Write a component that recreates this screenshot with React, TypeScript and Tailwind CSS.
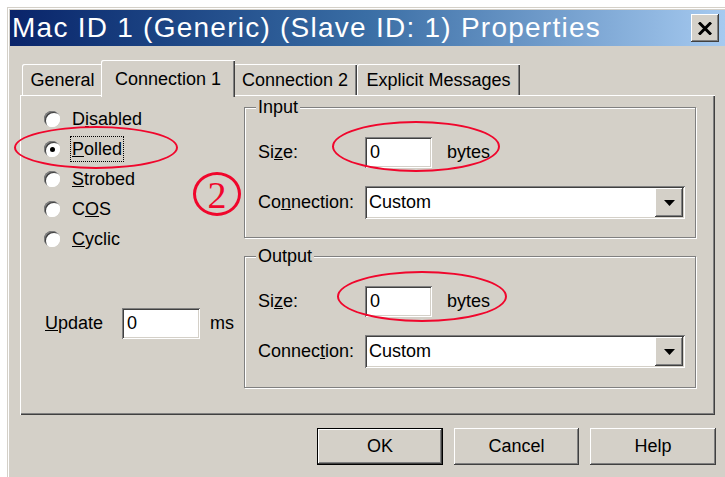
import { ReactNode } from 'react';

const sunken =
  'shadow-[inset_1px_1px_0_#808080,inset_-1px_-1px_0_#fff,inset_2px_2px_0_#404040,inset_-2px_-2px_0_#d4d0c8]';
const raised =
  'shadow-[inset_-1px_-1px_0_#404040,inset_1px_1px_0_#fff,inset_-2px_-2px_0_#808080,inset_2px_2px_0_#d4d0c8]';

function Radio({ label, checked, focused }: { label: ReactNode; checked?: boolean; focused?: boolean }) {
  return (
    <div className="h-[30px] flex items-center pl-[24px]">
      <div className="w-[16px] h-[16px] rounded-full bg-white flex items-center justify-center shadow-[inset_1px_1px_0_#808080,inset_-1px_-1px_0_#fff,inset_2px_2px_0_#404040]">
        {checked && <div className="w-[5px] h-[5px] rounded-full bg-black" />}
      </div>
      <span
        className={
          focused
            ? 'ml-[10px] px-[1px] leading-[24px] border border-dotted border-black'
            : 'ml-[12px] leading-[24px]'
        }
      >
        {label}
      </span>
    </div>
  );
}

function TextBox({ width, value }: { width: string; value: string }) {
  return (
    <div className={`${width} h-[31px] bg-white flex items-center pl-[5px] ${sunken}`}>{value}</div>
  );
}

function Combo() {
  return (
    <div className={`w-[320px] h-[33px] bg-white flex items-center justify-between pl-[4px] pr-[2px] ${sunken}`}>
      <span>Custom</span>
      <div className={`w-[28px] h-[29px] bg-[#d4d0c8] flex items-center justify-center ${raised}`}>
        <svg width="11" height="6" viewBox="0 0 11 6">
          <path d="M0 0h11L5.5 6z" fill="#000" />
        </svg>
      </div>
    </div>
  );
}

function Group({ title, height, conn }: { title: string; height: string; conn: ReactNode }) {
  return (
    <div
      className={`relative ${height} border border-[#808080] shadow-[inset_1px_1px_0_#fff,1px_1px_0_#fff] flex flex-col pt-[29px] gap-[18px]`}
    >
      <span className="absolute -top-[11px] left-[11px] px-[2px] bg-[#d4d0c8] leading-[20px]">{title}</span>
      <div className="flex items-center h-[31px]">
        <span className="w-[120px] pl-[13px]">
          Si<u>z</u>e:
        </span>
        <TextBox width="w-[67px]" value="0" />
        <span className="ml-[15px]">bytes</span>
      </div>
      <div className="flex items-center h-[33px]">
        <span className="w-[120px] pl-[13px]">{conn}</span>
        <Combo />
      </div>
    </div>
  );
}

export default function App() {
  return (
    <div className="relative w-[725px] h-[477px] overflow-hidden bg-white pl-[7px] pt-[7px] font-['Liberation_Sans',Arial,sans-serif] text-[18px] text-black">
      <div className="w-[718px] h-[470px] bg-[#d4d0c8] pl-[3px] pt-[3px] shadow-[inset_1px_1px_0_#d4d0c8,inset_2px_2px_0_#fff]">
        {/* caption */}
        <div className="h-[36px] flex items-center justify-between bg-linear-to-r from-[#0a246a] via-[#3a6ea5] to-[#a6caf0] pl-[2px] pr-[6px]">
          <span className="text-white text-[28px] leading-none tracking-[1.25px]">
            Mac ID 1 (Generic) (Slave ID: 1) Properties
          </span>
          <div className={`w-[28px] h-[28px] bg-[#d4d0c8] flex items-center justify-center ${raised}`}>
            <svg width="14" height="13" viewBox="0 0 14 13">
              <path d="M1 0.5l12 12M13 0.5l-12 12" stroke="#000" strokeWidth="3" />
            </svg>
          </div>
        </div>

        <div className="ml-[10px] w-[695px]">
          {/* tabs */}
          <div className="h-[49px] flex items-end pl-[2px]">
            <div className="w-[81px] h-[31px] flex items-center justify-center pt-[2px] shadow-[inset_1px_1px_0_#fff,inset_-1px_0_0_#404040,inset_-2px_0_0_#808080] rounded-tl-[2px]">
              General
            </div>
            <div className="relative z-10 -mx-[2px] -mb-[2px] w-[134px] h-[37px] bg-[#d4d0c8] flex items-start justify-center pt-[6px] shadow-[inset_1px_1px_0_#fff,inset_-1px_0_0_#404040,inset_-2px_0_0_#808080] rounded-tl-[2px]">
              Connection 1
            </div>
            <div className="w-[124px] h-[31px] flex items-center justify-center pt-[2px] shadow-[inset_1px_1px_0_#fff,inset_-1px_0_0_#404040,inset_-2px_0_0_#808080] rounded-tl-[2px]">
              Connection 2
            </div>
            <div className="w-[163px] h-[31px] flex items-center justify-center pt-[2px] shadow-[inset_1px_1px_0_#fff,inset_-1px_0_0_#404040,inset_-2px_0_0_#808080] rounded-tl-[2px]">
              Explicit Messages
            </div>
          </div>

          {/* tab page */}
          <div className="w-[695px] h-[320px] flex shadow-[inset_1px_1px_0_#fff,inset_-1px_-1px_0_#404040,inset_-2px_-2px_0_#808080]">
            <div className="w-[224px] pt-[9px]">
              <Radio label={<>D<u>i</u>sabled</>} />
              <Radio label={<><u>P</u>olled</>} checked focused />
              <Radio label={<><u>S</u>trobed</>} />
              <Radio label={<>C<u>O</u>S</>} />
              <Radio label={<><u>C</u>yclic</>} />
              <div className="mt-[54px] h-[31px] flex items-center pl-[25px]">
                <span className="w-[77px]">
                  <u>U</u>pdate
                </span>
                <TextBox width="w-[78px]" value="0" />
                <span className="ml-[10px]">ms</span>
              </div>
            </div>
            <div className="w-[452px] pt-[12px] flex flex-col gap-[18px]">
              <Group title="Input" height="h-[131px]" conn={<>Co<u>n</u>nection:</>} />
              <Group title="Output" height="h-[132px]" conn={<>Connec<u>t</u>ion:</>} />
            </div>
          </div>

          {/* buttons */}
          <div className="mt-[13px] flex justify-end gap-[11px] -mr-[1px]">
            <div className="w-[126px] h-[37px] border border-black">
              <div className={`w-full h-full flex items-center justify-center ${raised}`}>OK</div>
            </div>
            <div className={`w-[125px] h-[37px] flex items-center justify-center ${raised}`}>Cancel</div>
            <div className={`w-[126px] h-[37px] flex items-center justify-center ${raised}`}>Help</div>
          </div>
        </div>
      </div>

      {/* annotation marks */}
      <div className="absolute left-[14px] top-[126px] w-[164px] h-[43px] rounded-[50%] border-[2.5px] border-[#f0062c]" />
      <div className="absolute left-[332px] top-[121px] w-[168px] h-[51px] rounded-[50%] border-[2.5px] border-[#f0062c]" />
      <div className="absolute left-[337px] top-[271px] w-[170px] h-[51px] rounded-[50%] border-[2.5px] border-[#f0062c]" />
      <div className="absolute left-[193px] top-[172px] w-[48px] h-[44px] rounded-[50%] border-[3px] border-[#f0062c] flex items-center justify-center pt-[2px] font-['Liberation_Serif',serif] text-[38px] leading-none text-[#f0062c]">
        2
      </div>
    </div>
  );
}
